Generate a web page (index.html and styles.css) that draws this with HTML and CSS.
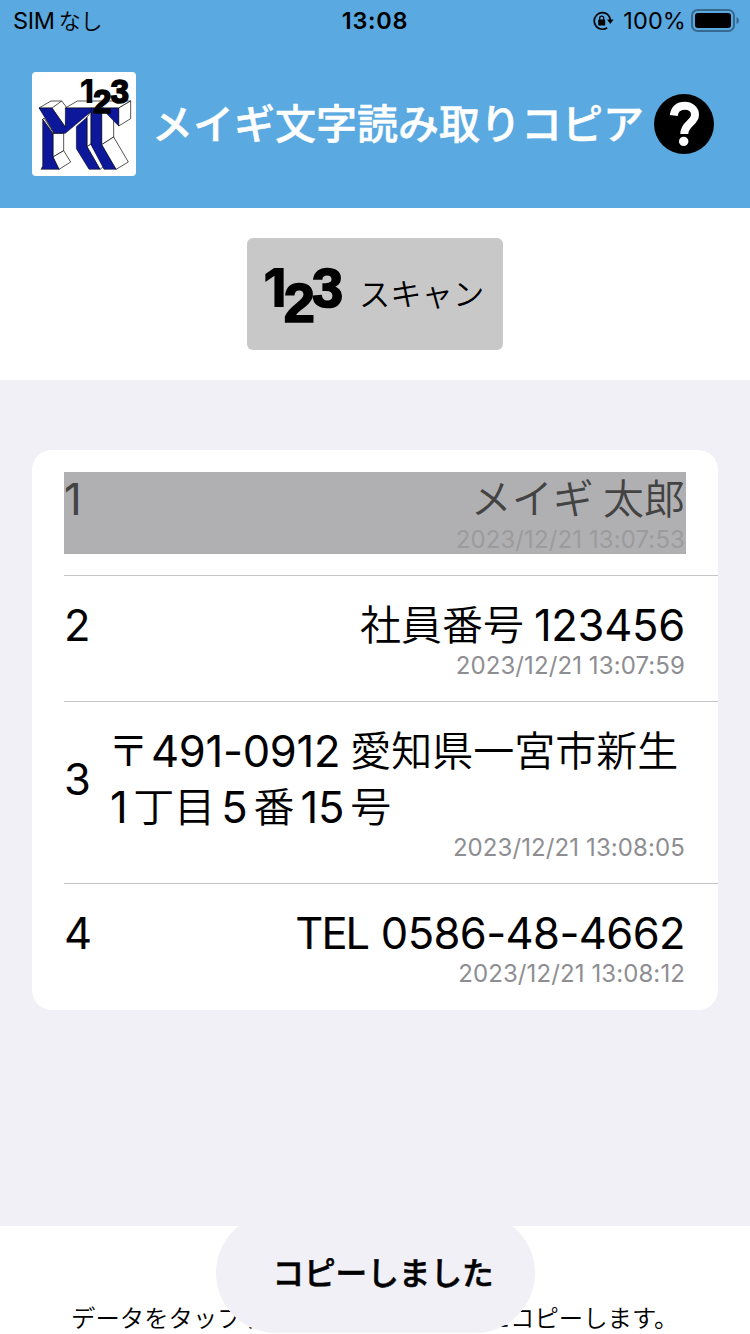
FILE: index.html
```html
<!DOCTYPE html>
<html lang="ja">
<head>
<meta charset="utf-8">
<title>メイギ文字読み取りコピア</title>
<link rel="stylesheet" href="styles.css">
</head>
<body>
<div class="screen">
  <div class="status">
    <div class="carrier">SIM<span class="carrier-kana">なし</span></div>
    <div class="clock">13:08</div>
    <div class="status-right">
      <svg class="lock" viewBox="0 0 22 20"><path d="M15.6 3.4A8.3 8.3 0 1 0 15.2 16.8M14.2 2.6A8.3 8.3 0 0 1 18.2 9" fill="none" stroke="#000" stroke-width="1.7"/><path d="M15 8.600h6.600l-3.300 4.400z"/><rect x="6.200" y="8.600" width="7" height="6" rx=".8"/><path d="M7.700 9V7.200a2 2 0 0 1 4 0V9" fill="none" stroke="#000" stroke-width="1.300"/></svg>
      <span class="percent">100%</span>
      <svg class="battery" viewBox="0 0 48 24"><rect x="1" y="1" width="42" height="21" rx="5.500" fill="none" stroke="#386a90" stroke-width="2"/><rect x="4" y="4" width="36" height="15" rx="3"/><path d="M45.500 8q2.500 1 2.500 3.500T45.500 15z" fill="#386a90"/></svg>
    </div>
  </div>
  <header class="header">
    <svg class="logo" viewBox="24 24 312 312">
      <rect x="24" y="24" width="312" height="312" rx="12" fill="#fff"/>
      <g fill="#fff" stroke="#000" stroke-width="2" stroke-linejoin="round">
        <path d="M45 132L81 111H113L129 132L125 190L84 132z"/>
        <path d="M84 132L113 111"/>
        <path d="M124 132L160 111H320L284 132z"/>
        <path d="M284 132L320 111V164L284 186z"/>
        <path d="M87 208H119V260L87 279z"/>
        <path d="M119 260L140 294L105 316L87 279z"/>
        <path d="M189 160L201 143V240L189 248z"/>
        <path d="M189 248L201 240L240 306L228 316z"/>
        <path d="M233 132H240L269 166V219L233 242z"/>
        <path d="M269 219L313 294L276 316L233 242z"/>
        <path d="M56 166L60 162L90 208H87z"/>
      </g>
      <g fill="#0c1799" stroke="#000" stroke-width="1.500" stroke-linejoin="round">
        <path d="M45 132H84L124 190V132H204L201 143L124 208H91z"/>
        <path d="M56 166L87 210V279L105 316H51L56 306z"/>
        <path d="M157 188L189 160V248L228 316H195L157 254z"/>
        <path d="M201 132H233V242L276 316H240L201 242z"/>
        <path d="M233 132H284V186L245 146z"/>
      </g>
      <g class="digits"><text class="one" x="167" y="116" font-size="97">1</text><text x="208" y="146" font-size="98">2</text><text x="260" y="116" font-size="98">3</text></g>
    </svg>
    <h1 class="title">メイギ文字読み取りコピア</h1>
    <svg class="help" viewBox="0 0 60 60"><circle cx="30" cy="30" r="30"/><path d="M19.800 21.500C20.500 14.500 25 11.800 30.500 11.800C36.500 11.800 41 15.500 41 20.800C41 29 30.300 29.500 30.300 40" fill="none" stroke="#fff" stroke-width="8"/><circle cx="29.700" cy="47.400" r="4.700" fill="#fff"/></svg>
  </header>
  <section class="scan">
    <div class="button">
      <svg class="scan-icon" viewBox="70 70 240 240"><g class="digits"><text class="one" x="70" y="228" font-size="161">1</text><text x="132" y="274" font-size="168">2</text><text x="217" y="229" font-size="168">3</text></g></svg>
      <span class="scan-label">スキャン</span>
    </div>
  </section>
  <main class="main">
    <div class="card">
      <div class="row"><div class="cell selected"><div class="line"><span class="num">1</span><span class="text"><span class="ja">メイギ 太郎</span></span></div><div class="time">2023/12/21 13:07:53</div></div></div>
      <div class="row"><div class="cell"><div class="line"><span class="num">2</span><span class="text"><span class="ja">社員番号</span> 123456</span></div><div class="time">2023/12/21 13:07:59</div></div></div>
      <div class="row"><div class="cell"><div class="line"><span class="num">3</span><span class="text address"><span class="ja postal">〒</span>491-0912 <span class="ja">愛知県一宮市新生</span><br>1<span class="ja mixed">丁目</span>5<span class="ja mixed">番</span>15<span class="ja mixed">号</span></span></div><div class="time">2023/12/21 13:08:05</div></div></div>
      <div class="row"><div class="cell"><div class="line"><span class="num">4</span><span class="text tel"><span class="tel-label">TEL</span> 0586-48-4662</span></div><div class="time">2023/12/21 13:08:12</div></div></div>
    </div>
  </main>
  <footer class="footer">
    <p class="hint">データをタップするとクリップボードにコピーします。</p>
    <div class="toast">コピーしました</div>
  </footer>
</div>
</body>
</html>
```

FILE: styles.css
```css
* { box-sizing: border-box; }
body { margin: 0; background: #fff; color: #000; font-family: Inter, "Noto Sans CJK JP", sans-serif; }
.screen { width: 750px; height: 1334px; overflow: hidden; display: flex; flex-direction: column; }
.status { height: 40px; background: #5aa9e1; display: grid; grid-template-columns: 1fr auto 1fr; align-items: center; padding: 0 11px 0 13px; font-size: 23.5px; line-height: 40px; }
.carrier { letter-spacing: -.3px; margin-top: -1px; }
.carrier-kana { font-family: "Noto Sans CJK JP", sans-serif; font-weight: 350; font-size: 22px; margin-left: 4px; }
.clock { font-weight: 600; letter-spacing: .7px; margin: 1px 2px 0 0; }
.status-right { display: flex; justify-content: flex-end; align-items: center; }
.lock { width: 22px; height: 20px; margin-right: 9px; }
.percent { margin: 1px 5px 0 0; letter-spacing: .1px; }
.battery { width: 48px; height: 24px; }
.header { height: 168px; background: #5aa9e1; display: flex; align-items: center; padding: 0 36px 0 32px; }
.logo { width: 104px; height: 104px; flex: none; }
.digits { font-family: "Liberation Sans", Arial, sans-serif; font-weight: 700; stroke: #000; stroke-width: 5px; }
.one { font-family: Inter, sans-serif; font-weight: 800; stroke: none; }
.title { flex: 1; margin: -7px 0 0 16px; color: #fff; font-size: 41px; font-weight: 500; -webkit-text-stroke: .5px #fff; white-space: nowrap; font-family: "Noto Sans CJK JP", sans-serif; line-height: 60px; }
.help { width: 60px; height: 60px; flex: none; }
.scan { height: 172px; display: flex; justify-content: center; align-items: center; }
.button { width: 256px; height: 112px; border-radius: 6px; background: #c8c8c8; display: flex; align-items: center; padding-left: 16px; }
.scan-icon { width: 80px; height: 80px; }
.scan-label { margin: -4px 0 0 16px; font-family: "Noto Sans CJK JP", sans-serif; font-weight: 350; font-size: 31.3px; white-space: nowrap; }
.main { height: 846px; background: #f1f0f6; padding: 70px 32px 0; }
.card { background: #fff; border-radius: 20px; padding-left: 32px; }
.row { padding: 22px 32px 21px 0; border-bottom: 1px solid #c5c5c7; }
.row:last-child { border-bottom-color: transparent; }
.cell { display: flex; flex-direction: column; padding: 0 1px 1px 0; }
.selected { background: #b0b0b2; color: #434343; }
.line { display: flex; align-items: center; justify-content: space-between; margin: -1px 0 0; font-size: 43.5px; line-height: 56px; }
.text { white-space: nowrap; word-spacing: -2px; letter-spacing: -.25px; }
.ja { font-family: "Noto Sans CJK JP", sans-serif; font-weight: 350; font-size: 41px; line-height: 1; letter-spacing: 0; vertical-align: 1px; }
.selected .ja { word-spacing: 0; }
.address { flex: 1; margin-left: 19px; }
.postal { margin: 0 2px 0 -2px; }
.mixed { margin: 0 6px; }
.tel { letter-spacing: -.6px; word-spacing: 1px; }
.tel-label { letter-spacing: -2px; }
.time { text-align: right; font-size: 24px; line-height: 26px; color: #8e8e92; letter-spacing: .1px; }
.selected .time { color: #9b9b9d; }
.footer { position: relative; height: 108px; background: #fff; padding: 72px 0 0 71px; }
.hint { margin: 0; font-family: "Noto Sans CJK JP", sans-serif; font-weight: 350; font-size: 24.4px; line-height: 38px; white-space: nowrap; }
.toast { position: absolute; left: 216px; top: -13px; width: 319px; height: 120px; border-radius: 60px; background: #f1f0f6; display: flex; align-items: center; justify-content: center; font-family: "Noto Sans CJK JP", sans-serif; font-weight: 500; -webkit-text-stroke: .6px #000; font-size: 31.6px; padding: 0 0 4px 15px; }
```
